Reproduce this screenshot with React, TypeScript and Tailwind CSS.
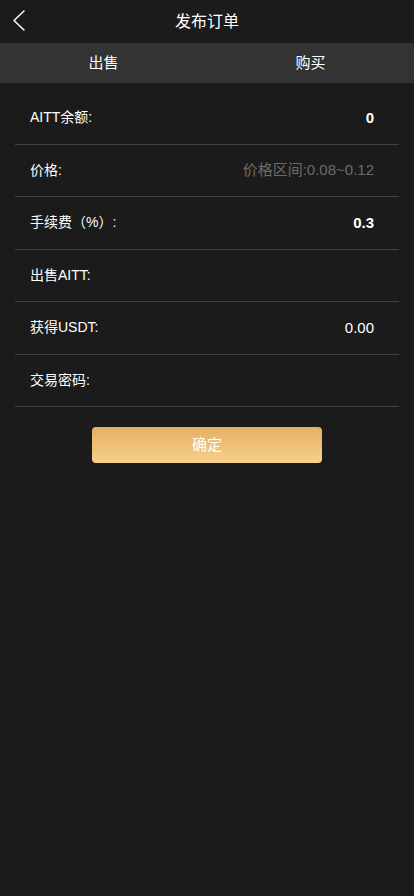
const rows = [
    { label: "AITT余额:", value: "0", cls: "text-white font-bold text-[15px]" },
    { label: "价格:", value: "价格区间:0.08~0.12", cls: "text-[#6b6b6b] text-[15px]" },
    { label: "手续费（%）:", value: "0.3", cls: "text-white font-bold text-[15px]" },
    { label: "出售AITT:", value: "", cls: "" },
    { label: "获得USDT:", value: "0.00", cls: "text-white text-[15px]" },
    { label: "交易密码:", value: "", cls: "" },
];

export default function App() {
    return (
        <div className="min-h-[896px] bg-[#1b1b1b] text-white font-['Liberation_Sans','Noto_Sans_CJK_SC',sans-serif]">
            <div className="relative h-[43px] flex items-center justify-center">
                <svg className="absolute left-[10px] top-[8px] w-[18px] h-[26px]" viewBox="0 0 18 26" fill="none">
                    <polyline points="14,3 4,12.5 14,22" stroke="white" strokeWidth="1.5" strokeLinecap="round" strokeLinejoin="round" />
                </svg>
                <h1 className="text-[16px]">发布订单</h1>
            </div>

            <div className="h-[40px] bg-[#333333] grid grid-cols-2 text-[15px]">
                <div className="flex items-center justify-center">出售</div>
                <div className="flex items-center justify-center">购买</div>
            </div>

            <div className="px-[15px] pt-[9px]">
                {rows.map((r) => (
                    <div key={r.label} className="h-[52.5px] pl-[15px] pr-[25px] flex items-center justify-between border-b border-[#3f3f3f]">
                        <span className="text-[14px]">{r.label}</span>
                        {r.value && <span className={r.cls}>{r.value}</span>}
                    </div>
                ))}
            </div>

            <div className="flex justify-center pt-[20px]">
                <button className="w-[230px] h-[36px] rounded-[4px] bg-gradient-to-b from-[#e4b063] to-[#f8d08c] text-[15px] text-white">
                    确定
                </button>
            </div>
        </div>
    );
}
